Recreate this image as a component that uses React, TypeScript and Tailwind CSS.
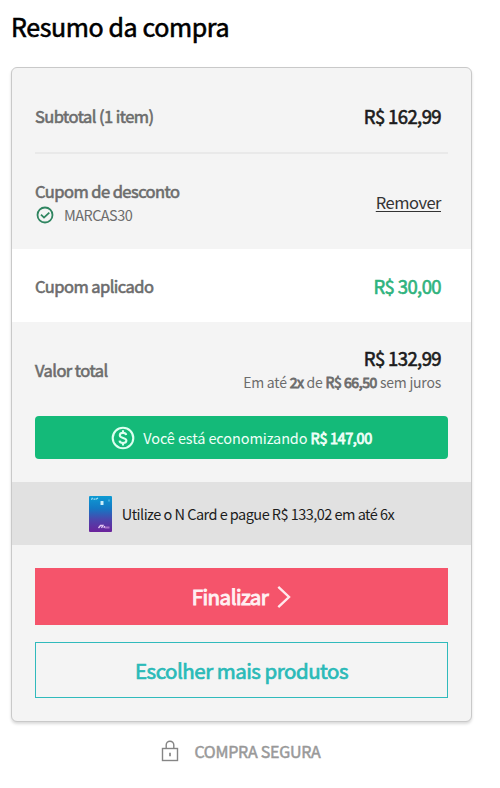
import type { ReactNode } from "react";

function CheckIcon() {
  return (
    <svg width="18" height="18" viewBox="0 0 18 18" fill="none" stroke="#2f8560" strokeWidth="1.8">
      <circle cx="9" cy="9" r="7.5" />
      <path d="M5 8.700l3 2.900 5.300-5" />
    </svg>
  );
}

function CoinIcon() {
  return (
    <svg width="24" height="24" viewBox="0 0 24 24" fill="none" stroke="#dcfff0" strokeWidth="2.1">
      <circle cx="12" cy="12" r="10.3" />
      <path d="M15.2 8.9c-.3-1.3-1.5-2-3.2-2-1.900 0-3.200.900-3.200 2.400 0 3.600 6.600 1.800 6.600 5.300 0 1.500-1.400 2.500-3.400 2.500s-3.300-.9-3.500-2.400M12 4.300v2.600M12 16.800v2.600" />
    </svg>
  );
}

function CardIcon() {
  return (
    <svg width="23" height="36" viewBox="0 0 23 36">
      <defs>
        <linearGradient id="ncard" x1="0" y1="0" x2="0" y2="1">
          <stop offset="0" stopColor="#0d9bd3" />
          <stop offset="0.35" stopColor="#1478c4" />
          <stop offset="0.65" stopColor="#4b46ad" />
          <stop offset="1" stopColor="#6b229b" />
        </linearGradient>
      </defs>
      <rect width="23" height="36" rx="1" fill="url(#ncard)" />
      <path d="M2.500 3.700l1-2M4.500 3.200h2M7 3.200l2-1.200" stroke="#a5e2f5" strokeWidth="1.200" />
      <path d="M20 3.500v2" stroke="#70c6e9" />
      <rect x="11.500" y="5" width="3" height="4" rx=".5" fill="#c9eefa" />
      <path d="M9.500 32l2-2.500h2.500L12.500 32M15 32l.6-2" stroke="#e1c5f2" strokeWidth="1.300" fill="none" />
      <path d="M16 31.500h4.500" stroke="#a672c8" strokeWidth="2" />
    </svg>
  );
}

function ChevronIcon() {
  return (
    <svg width="14" height="24" viewBox="0 0 14 24" fill="none" stroke="#ffe9ed" strokeWidth="2.400">
      <path d="M1.300 1.800L12 12 1.300 22.200" />
    </svg>
  );
}

function LockIcon() {
  return (
    <svg width="18" height="22" viewBox="0 0 18 22" fill="none" stroke="#858585" strokeWidth="1.400">
      <rect x="1.500" y="8.500" width="15" height="12" />
      <path d="M5.200 8.500V5a3.800 3.800 0 0 1 7.600 0v3.500" />
      <path d="M9 12.800v3.400" strokeWidth="1.700" />
    </svg>
  );
}

function Label({ children }: { children: ReactNode }) {
  return (
    <span className="block text-[16.5px] leading-6 tracking-[-0.55px] text-[#6c6c6c] [-webkit-text-stroke:0.6px]">
      {children}
    </span>
  );
}

function Price({ children }: { children: ReactNode }) {
  return (
    <span className="block text-[18.5px] leading-6 tracking-[-0.6px] [-webkit-text-stroke:0.6px]">
      {children}
    </span>
  );
}

// Slightly emboldened regular weight, narrower than the real bold face
function Strong({ children }: { children: ReactNode }) {
  return <strong className="font-normal tracking-[-0.4px] [-webkit-text-stroke:0.8px]">{children}</strong>;
}

export default function App() {
  return (
    <div className="h-[788px] w-[500px] overflow-hidden bg-white pl-[11px] font-['Noto_Sans_CJK_JP','Noto_Sans',sans-serif] whitespace-nowrap text-[#1c1c1c]">
      <h1 className="flex h-[67px] items-center pb-4 text-[25px] leading-8 tracking-[-0.4px] text-black [-webkit-text-stroke:0.6px]">
        Resumo da compra
      </h1>

      <section className="flex h-[655px] w-[461px] flex-col overflow-hidden rounded-md border border-[#c9c9c9] bg-[#f4f4f4] shadow-[0_2px_3px_rgba(0,0,0,0.15)]">
        {/* Subtotal */}
        <div className="mx-[23px] flex h-[86px] items-center justify-between border-b-2 border-[#e9e9e9] pt-3 pr-[7px]">
          <Label>Subtotal (1 item)</Label>
          <Price>R$ 162,99</Price>
        </div>

        {/* Coupon */}
        <div className="flex h-[95px] items-center justify-between pr-[30px] pl-[23px]">
          <div className="pt-0.5">
            <Label>Cupom de desconto</Label>
            <div className="flex h-6 items-center gap-[10px] pl-px">
              <CheckIcon />
              <span className="text-[14.5px] tracking-[-0.55px] text-[#6c6c6c]">MARCAS30</span>
            </div>
          </div>
          <button className="text-[16.5px] leading-6 tracking-[-0.5px] text-[#333] underline decoration-1 underline-offset-2">
            Remover
          </button>
        </div>

        {/* Applied discount */}
        <div className="flex h-[73px] items-center justify-between bg-white pr-[30px] pl-[23px]">
          <Label>Cupom aplicado</Label>
          <div className="text-[#2fb37d]">
            <Price>R$ 30,00</Price>
          </div>
        </div>

        {/* Total */}
        <div className="flex h-[94px] items-center justify-between pt-0.5 pr-[30px] pl-[23px]">
          <Label>Valor total</Label>
          <div className="text-right">
            <Price>R$ 132,99</Price>
            <p className="text-[14px] leading-6 tracking-[-0.22px] text-[#6c6c6c]">
              Em até <Strong>2x</Strong> de <Strong>R$ 66,50</Strong> sem juros
            </p>
          </div>
        </div>
        <div className="mx-[23px] flex h-[43px] items-center justify-center gap-2 rounded bg-[#14ba79] text-[14.5px] tracking-[-0.1px] text-[#effff8]">
          <CoinIcon />
          <span>
            Você está economizando <Strong>R$ 147,00</Strong>
          </span>
        </div>

        {/* Store card offer */}
        <div className="mt-[23px] flex h-[63px] items-center justify-center gap-[10px] bg-[#e1e1e1] text-[14.5px] tracking-[-0.53px]">
          <CardIcon />
          <span>Utilize o N Card e pague R$ 133,02 em até 6x</span>
        </div>

        {/* Actions */}
        <div className="mx-[23px] mt-[23px] flex flex-col gap-[17px]">
          <button className="flex h-[57px] items-center justify-center gap-[9px] bg-[#f5546b] text-[20.5px] tracking-[-0.5px] text-[#fff0f2]">
            <span className="[-webkit-text-stroke:1px]">Finalizar</span>
            <ChevronIcon />
          </button>
          <button className="flex h-14 items-center justify-center border border-[#30babc] text-[20.5px] tracking-[-0.5px] text-[#2bbab8] [-webkit-text-stroke:0.7px]">
            <span>Escolher mais produtos</span>
          </button>
        </div>
      </section>

      <footer className="flex h-[58px] w-[460px] items-center justify-center gap-[15px] text-[16px] tracking-[-0.25px] text-[#999] [-webkit-text-stroke:0.5px]">
        <LockIcon />
        <span>COMPRA SEGURA</span>
      </footer>
    </div>
  );
}
